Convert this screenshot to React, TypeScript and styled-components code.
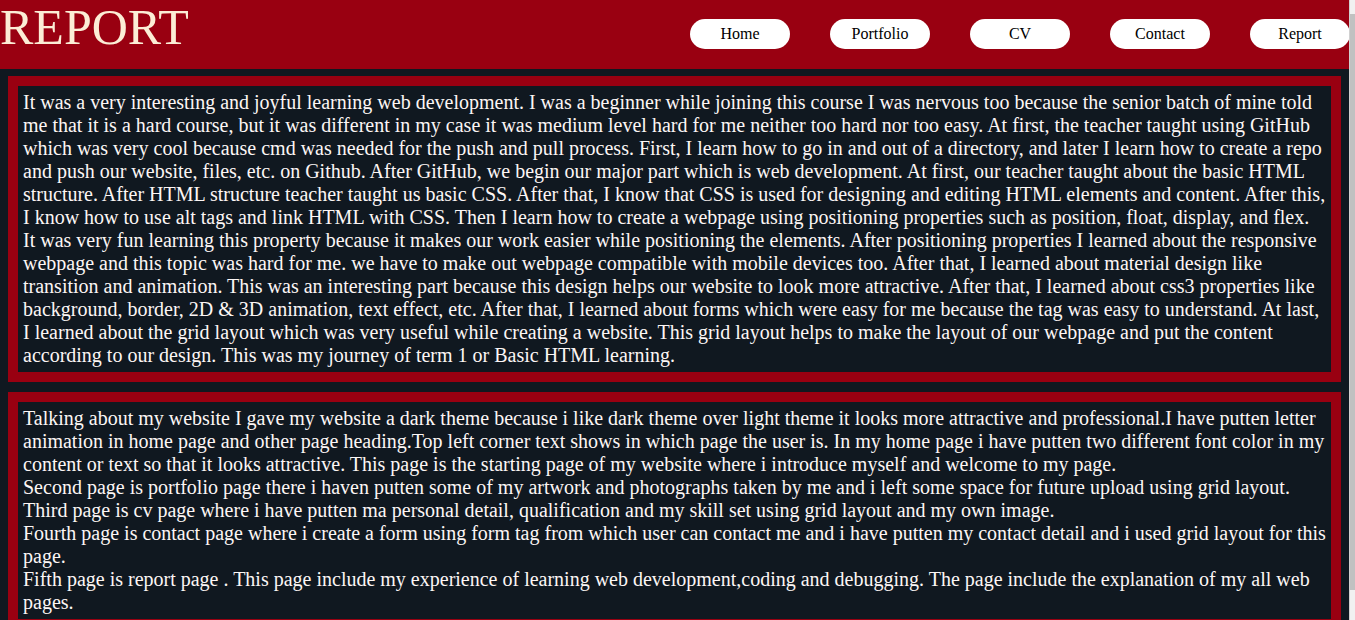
import React from "react";
import styled, { createGlobalStyle } from "styled-components";

const GlobalStyle = createGlobalStyle`
  html {
    background: #101820;
  }
  body {
    margin: 0;
    background: #101820;
    font-family: "Liberation Serif", "Times New Roman", serif;
  }
`;

const Page = styled.div`
  margin-right: 5px;
`;

const ScrollTrack = styled.div`
  position: fixed;
  top: 0;
  right: 0;
  bottom: 0;
  width: 5px;
  display: flex;
  flex-direction: column;
  background: #f1f1f1;
  border-left: 1px solid #d0d0d0;
`;

const ScrollThumb = styled.div`
  margin-top: 14px;
  height: 576px;
  background: #c1c1c1;
`;

const Header = styled.header`
  display: flex;
  justify-content: space-between;
  align-items: flex-start;
  height: 69px;
  background: #990011;
`;

const Title = styled.h1`
  margin: 0;
  padding-top: 1px;
  font-family: "Liberation Serif", "Times New Roman", serif;
  font-weight: 400;
  font-size: 50px;
  line-height: 52px;
  color: #fcedd6;
`;

const Nav = styled.nav`
  display: flex;
  gap: 40px;
  padding-top: 19px;
`;

const NavLink = styled.a`
  display: flex;
  align-items: center;
  justify-content: center;
  width: 100px;
  height: 30px;
  border-radius: 15px;
  background: #ffffff;
  color: #000000;
  font-size: 16px;
  text-decoration: none;
`;

const Main = styled.main`
  display: flex;
  flex-direction: column;
  gap: 10px;
  padding: 7px 9px 8px 8px;
`;

const Card = styled.section`
  border: 10px solid #990011;
  background: #101820;
  padding: 5px;
`;

const Text = styled.p`
  margin: 0;
  font-size: 20px;
  line-height: 23px;
  color: #fcf6f5;
`;

const links = ["Home", "Portfolio", "CV", "Contact", "Report"];

export default function App() {
  return (
    <>
      <GlobalStyle />
      <Page>
        <Header>
          <Title>REPORT</Title>
          <Nav>
            {links.map((l) => (
              <NavLink key={l} href="#">
                {l}
              </NavLink>
            ))}
          </Nav>
        </Header>
        <Main>
          <Card>
            <Text>
              It was a very interesting and joyful learning web development. I was a beginner while joining this course I was nervous too because the senior batch of mine told me that it is a hard course, but it was different in my case it was medium level hard for me neither too hard nor too easy. At first, the teacher taught using GitHub which was very cool because cmd was needed for the push and pull process. First, I learn how to go in and out of a directory, and later I learn how to create a repo and push our website, files, etc. on Github. After GitHub, we begin our major part which is web development. At first, our teacher taught about the basic HTML structure. After HTML structure teacher taught us basic CSS. After that, I know that CSS is used for designing and editing HTML elements and content. After this, I know how to use alt tags and link HTML with CSS. Then I learn how to create a webpage using positioning properties such as position, float, display, and flex. It was very fun learning this property because it makes our work easier while positioning the elements. After positioning properties I learned about the responsive webpage and this topic was hard for me. we have to make out webpage compatible with mobile devices too. After that, I learned about material design like transition and animation. This was an interesting part because this design helps our website to look more attractive. After that, I learned about css3 properties like background, border, 2D &amp; 3D animation, text effect, etc. After that, I learned about forms which were easy for me because the tag was easy to understand. At last, I learned about the grid layout which was very useful while creating a website. This grid layout helps to make the layout of our webpage and put the content according to our design. This was my journey of term 1 or Basic HTML learning.
            </Text>
          </Card>
          <Card>
            <Text>
              Talking about my website I gave my website a dark theme because i like dark theme over light theme it looks more attractive and professional.I have putten letter animation in home page and other page heading.Top left corner text shows in which page the user is. In my home page i have putten two different font color in my content or text so that it looks attractive. This page is the starting page of my website where i introduce myself and welcome to my page.
              <br />
              Second page is portfolio page there i haven putten some of my artwork and photographs taken by me and i left some space for future upload using grid layout.
              <br />
              Third page is cv page where i have putten ma personal detail, qualification and my skill set using grid layout and my own image.
              <br />
              Fourth page is contact page where i create a form using form tag from which user can contact me and i have putten my contact detail and i used grid layout for this page.
              <br />
              Fifth page is report page . This page include my experience of learning web development,coding and debugging. The page include the explanation of my all web pages.
            </Text>
          </Card>
        </Main>
      </Page>
      <ScrollTrack>
        <ScrollThumb />
      </ScrollTrack>
    </>
  );
}
